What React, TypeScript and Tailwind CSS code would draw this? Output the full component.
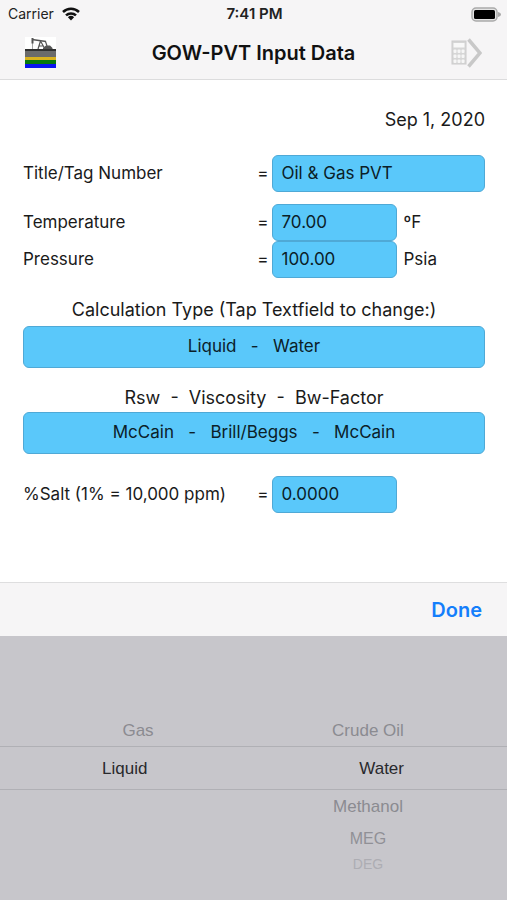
/**
 * GOW-PVT Input Screen
 * Form for the PVT inputs with a two column picker for the calculation type
 */

import { useState } from 'react';

const phases = ['Gas', 'Liquid'];
const fluids = ['Crude Oil', 'Water', 'Methanol', 'MEG', 'DEG'];

// Rows get smaller and lighter the further they are from the selected one
const rowStyles = [
  'h-[42px] text-[17px] text-[#29292d]',
  'h-[34px] text-[17px] text-[#8b8b91] text-center',
  'h-[30px] text-base text-[#909096] text-center',
  'h-4 text-sm text-[#adadb3] text-center',
];

const fieldStyle =
  'rounded-md border border-[#4fa9d6] bg-[#5ac8fa] text-[17px] text-[#0b2028] focus:outline-none';

export default function App() {
  const [title, setTitle] = useState('Oil & Gas PVT');
  const [temperature, setTemperature] = useState('70.00');
  const [pressure, setPressure] = useState('100.00');
  const [salt, setSalt] = useState('0.0000');
  const [phase, setPhase] = useState(1);
  const [fluid, setFluid] = useState(1);
  const [pickerOpen, setPickerOpen] = useState(true);

  return (
    <div className="flex min-h-screen flex-col bg-white font-['Inter',sans-serif] text-[#1a1a1a]">
      <header className="border-b border-[#dcdcdd] bg-[#f6f5f6]">
        <StatusBar />
        <div className="grid h-[51px] grid-cols-[1fr_auto_1fr] items-center px-[25px] pb-0.5">
          <PumpLogo />
          <h1 className="text-xl font-semibold text-[#111111]">GOW-PVT Input Data</h1>
          <button type="button" aria-label="Calculate" className="justify-self-end">
            <CalculateIcon />
          </button>
        </div>
      </header>

      <main className="flex flex-col pt-6 pr-[22px] pb-12 pl-[23px]">
        <p className="text-right text-lg leading-8">Sep 1, 2020</p>

        {/* Input Fields */}
        <div className="mt-[19px]">
          <FieldRow id="title" label="Title/Tag Number" value={title} onChange={setTitle} />
        </div>
        <div className="mt-3">
          <FieldRow id="temperature" label="Temperature" value={temperature} onChange={setTemperature} unit="ºF" />
          <FieldRow id="pressure" label="Pressure" value={pressure} onChange={setPressure} unit="Psia" />
        </div>

        {/* Calculation Type */}
        <label htmlFor="calc-type" className="mt-[18px] mb-0.5 text-center text-lg leading-7">
          Calculation Type (Tap Textfield to change:)
        </label>
        <input
          id="calc-type"
          type="text"
          readOnly
          value={`${phases[phase]}   -   ${fluids[fluid]}`}
          onClick={() => setPickerOpen(true)}
          className={`${fieldStyle} h-[42px] w-full pb-0.5 text-center`}
        />

        {/* Correlations */}
        <label htmlFor="correlations" className="mt-4 text-center text-lg leading-7 whitespace-pre">
          {'Rsw  -  Viscosity  -  Bw-Factor'}
        </label>
        <input
          id="correlations"
          type="text"
          readOnly
          value="McCain   -   Brill/Beggs   -   McCain"
          className={`${fieldStyle} h-[42px] w-full pb-0.5 text-center`}
        />

        <div className="mt-[22px]">
          <FieldRow id="salt" label="%Salt (1% = 10,000 ppm)" value={salt} onChange={setSalt} unit="" />
        </div>
      </main>

      {/* Picker */}
      {pickerOpen && (
        <section className="mt-auto">
          <div className="flex h-[54px] items-center justify-end border-t border-[#dededf] bg-[#f6f5f6] px-[25px]">
            <button
              type="button"
              onClick={() => setPickerOpen(false)}
              className="text-xl font-semibold text-[#147efb]"
            >
              Done
            </button>
          </div>
          <div className="relative h-[264px] overflow-hidden bg-[#c7c6cb] font-['Liberation_Sans',sans-serif]">
            <div className="pointer-events-none absolute inset-x-0 top-[110px] h-[44px] border-y border-[#b0b0b5]" />
            <div className="grid h-full grid-cols-2">
              <PickerColumn
                label="Phase"
                options={phases}
                selected={phase}
                onSelect={setPhase}
                columnStyle="items-start pl-[102px]"
                selectedStyle="text-left"
              />
              <PickerColumn
                label="Fluid"
                options={fluids}
                selected={fluid}
                onSelect={setFluid}
                columnStyle="items-end pr-[103px]"
                selectedStyle="text-right"
              />
            </div>
          </div>
        </section>
      )}
    </div>
  );
}

function FieldRow({ id, label, value, onChange, unit = null }) {
  return (
    <div className="flex items-center text-[17px]">
      <label htmlFor={id} className="flex-1">
        {label}
      </label>
      <span className="mr-1">=</span>
      <div className="flex w-[46%] items-center">
        <input
          id={id}
          type="text"
          value={value}
          onChange={(e) => onChange(e.target.value)}
          className={`${fieldStyle} h-[37px] px-2 pb-0.5 ${unit === null ? 'w-full' : 'w-[125px]'}`}
        />
        {unit && <span className="ml-1.5">{unit}</span>}
      </div>
    </div>
  );
}

function PickerColumn({ label, options, selected, onSelect, columnStyle, selectedStyle }) {
  return (
    <div role="listbox" aria-label={label} className={`flex flex-col pt-[78px] ${columnStyle}`}>
      {options.map((option, index) => (
        <button
          key={option}
          type="button"
          role="option"
          aria-selected={index === selected}
          onClick={() => onSelect(index)}
          className={`min-w-[72px] ${rowStyles[Math.min(Math.abs(index - selected), 3)]} ${
            index === selected ? selectedStyle : ''
          }`}
        >
          {option}
        </button>
      ))}
    </div>
  );
}

function StatusBar() {
  return (
    <div className="grid h-7 grid-cols-[1fr_auto_1fr] items-center pr-1.5 pl-2 text-sm text-[#222222]">
      <div className="flex items-center gap-2">
        <span>Carrier</span>
        <svg className="h-[14px] w-[18px]" viewBox="0 0 18 14" fill="none" stroke="#111111" strokeWidth="2.5">
          <path d="M1 5a11.5 11.5 0 0 1 16 0" />
          <path d="M4 8.4a7.2 7.2 0 0 1 10 0" />
          <path d="M9 13.5 5.9 10.3a4.5 4.5 0 0 1 6.2 0z" fill="#111111" stroke="none" />
        </svg>
      </div>
      <span className="text-[15px] font-semibold">7:41 PM</span>
      <svg className="h-[15px] w-[30px] justify-self-end" viewBox="0 0 30 15">
        <rect x="1" y="1" width="25" height="13" rx="4" fill="#e4e4e4" stroke="#aaaaaa" strokeWidth="1.5" />
        <rect x="3" y="3" width="21" height="9" rx="1.5" fill="#000000" />
        <path d="M27 5v5c1.8-.5 3-1.400 3-2.500s-1.200-2-3-2.500z" fill="#aaaaaa" />
      </svg>
    </div>
  );
}

function PumpLogo() {
  return (
    <svg className="h-[31px] w-[31px]" viewBox="0 0 31 31" role="img" aria-label="GOW-PVT">
      <rect width="31" height="31" fill="#ffffff" />
      <g fill="none" stroke="#555555">
        <path d="M7 2.5 21 4.5" strokeWidth="1.5" />
        <path d="M7.5 1v5.5" strokeWidth="2" />
        <path d="M7.5 6v6" strokeWidth=".5" />
        <path d="M15.5 4 13 12M15.5 4 20 12M14 9h4" strokeWidth="1.2" />
        <path d="M20.5 4.5 22 9" strokeWidth="1.2" />
      </g>
      <path d="M18 12.5V11l3-2.5h4l2.5 2.5v1.5z" fill="#555555" />
      <rect y="12" width="31" height="8" fill="#6b6b6b" />
      <rect y="12" width="31" height="2" fill="#303030" />
      <rect y="20" width="31" height="3" fill="#d9b21f" />
      <rect y="23" width="31" height="4" fill="#087a0c" />
      <rect y="27" width="31" height="4" fill="#0a14f0" />
    </svg>
  );
}

function CalculateIcon() {
  return (
    <svg className="h-[30px] w-[32px]" viewBox="0 0 32 30" fill="none">
      <rect x="2" y="3" width="14" height="23" fill="#d6d6d6" stroke="#cccccc" />
      <rect x="3.5" y="5" width="11" height="4.5" fill="#f8f8f8" />
      <g fill="#f6f6f6">
        {[11.5, 16.5, 21.5].map((y) =>
          [3.5, 7.5, 11.5].map((x) => <rect key={`${x}-${y}`} x={x} y={y} width="3" height="3.5" rx="1" />)
        )}
      </g>
      <path d="m18.500 1.500 11.500 13.500-11.500 13.500" stroke="#c8c8c8" strokeWidth="3.5" />
    </svg>
  );
}
